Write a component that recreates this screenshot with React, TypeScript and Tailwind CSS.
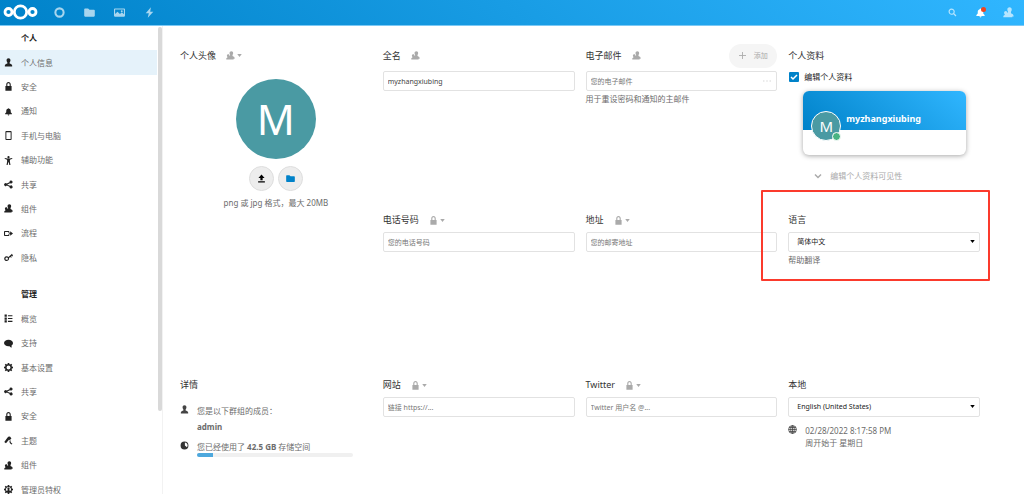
import React from "react";

type IconProps = { className?: string };

function Glyph({ className = "size-[9px]", children }: IconProps & { children: React.ReactNode }) {
  return (
    <svg viewBox="0 0 16 16" className={`shrink-0 ${className}`} fill="currentColor" aria-hidden="true">
      {children}
    </svg>
  );
}

const shapes = {
  user: <path d="M8 .5C5.900.5 4.500 2 4.500 4.200c0 1.600.7 2.900 1.500 3.600v2C4.300 10.700 1.500 11 1.500 13.500V15h13v-1.500c0-2.500-2.800-2.800-4.500-3.700v-2c.8-.7 1.500-2 1.500-3.600C11.500 2 10.100.5 8 .5z" />,
  lock: <path fillRule="evenodd" d="M8 0C5.600 0 4 1.900 4 4.300V7H2.500v8.500h11V7H12V4.300C12 1.900 10.400 0 8 0zm0 2c1.300 0 2 1 2 2.300V7H6V4.300C6 3 6.700 2 8 2z" />,
  bell: <path d="M8 2C7.300 2 6.800 2.500 6.800 3.200 4.900 3.700 4 5.200 4 7v2.500L2 11.500V13h12v-1.500l-2-2V7c0-1.800-.9-3.300-2.800-3.800C9.200 2.500 8.700 2 8 2zM6.500 13.500c0 1 .7 1.700 1.500 1.700s1.500-.7 1.500-1.700z" />,
  phone: <path fillRule="evenodd" d="M4 0C3.100 0 2.500.6 2.500 1.500v13c0 .9.600 1.500 1.500 1.500h8c.9 0 1.500-.6 1.500-1.500v-13C13.500.6 12.900 0 12 0zm.2 2h7.600v12H4.200z" />,
  access: <path d="M8 0a2 2 0 1 1 0 4 2 2 0 0 1 0-4zM1.500 3.500 6 4.600h4l4.500-1.100.4 1.600L10.500 6.500V10l1 6h-2L8.400 11h-.8L6.500 16h-2l1-6V6.500L1.100 5.100z" />,
  share: <path d="M12.500 1a2.700 2.700 0 0 0-2.700 3L5 6.300a2.700 2.700 0 1 0 0 3.600l4.800 2.300a2.700 2.700 0 1 0 1-2L6.100 8.300v-.4L10.800 5.700A2.700 2.700 0 1 0 12.500 1z" />,
  contacts: <path d="M9.500.5C7.500.5 6.300 1.900 6.300 3.800c0 1.300.4 2.300 1 3v1C6.900 8 6.500 8.200 6.100 8.500 6.200 6.700 5.400 5.700 4 5.700S1.600 6.800 1.600 8.200c0 1 .4 1.800.9 2.300v1C1.500 12 .5 12.300.5 13.700V15h13v-1.300H15.500C15.500 10.500 13.500 10 11.600 9V6.800c.7-.7 1.100-1.700 1.100-3C12.700 1.900 11.500.5 9.500.5z" />,
  flow: <path fillRule="evenodd" d="M1.800 3.500C.8 3.500 0 4.300 0 5.300v5.400c0 1 .8 1.800 1.800 1.800h6c1 0 1.700-.8 1.700-1.800V5.300c0-1-.7-1.800-1.700-1.800zm.1 1.700h5.800v5.600H1.900zM11 4l5 4-5 4V9.200H7.500V6.800H11z" />,
  key: <path fillRule="evenodd" d="M14.200 1.300 8 7.200A4.300 4.300 0 1 0 9 10c0-.3 0-.6-.1-.9l2.200-2.100 1.500 1.500 1.300-1.300-1.500-1.500.9-.9 1.300 1.300L16 4.700zM4.800 7.800a2.200 2.200 0 1 1 0 4.400 2.200 2.200 0 0 1 0-4.400z" />,
  list: <path d="M1 1h4v4H1zm6 1h8v2H7zM1 6h4v4H1zm6 1h8v2H7zM1 11h4v4H1zm6 1h8v2H7z" />,
  comment: <path d="M8 1.500c-4.400 0-8 2.400-8 5.700s3.600 5.700 8 5.700c.7 0 1.300-.1 1.900-.2.900 1.200 2.300 2.300 4.100 2.600-.5-1-.7-2.500-.6-3.700C15 10.600 16 9 16 7.200c0-3.300-3.600-5.700-8-5.700z" />,
  gear: <path fillRule="evenodd" d="M6.700 0h2.600l.4 2.100 1.300.6L12.800 1.500l1.800 1.800-1.200 1.800.5 1.200 2.100.4v2.600l-2.100.4-.5 1.300 1.200 1.800-1.800 1.800-1.800-1.200-1.300.5L9.300 16H6.700l-.4-2.100-1.300-.5-1.800 1.200-1.800-1.800L2.600 11l-.5-1.300L0 9.300V6.700l2.100-.4.500-1.300-1.200-1.700 1.800-1.800L5 2.700l1.300-.6zM8 4.500a3.500 3.500 0 1 0 0 7 3.500 3.500 0 0 0 0-7z" />,
  brush: <path d="M9.500 1C8 1 7 1.800 6 3L.5 10.500 3.500 13l5.300-6.200 1.700.4 2.700-2.700L11 1.200zM9.800 8.500l1.600-1.500c-.2 3 .8 5 3.600 6.600L13.500 15C10.500 13.500 9.500 11.500 9.800 8.500z" />,
  badge: <path fillRule="evenodd" d="M6.700 0h2.600l.4 2.100 1.300.6 1.800-1.200 1.800 1.800-1.200 1.800.5 1.200 2.100.4v2.600l-2.100.4-.5 1.300 1.200 1.800-1.800 1.800-1.800-1.200-1.300.5L9.300 16H6.700l-.4-2.100-1.300-.5-1.800 1.200-1.800-1.800L2.600 11l-.5-1.300L0 9.300V6.700l2.100-.4.500-1.300-1.200-1.700 1.800-1.800L5 2.700l1.300-.6zM8 3.500a4.500 4.500 0 0 0-3.600 7.200L6.800 9.300V8.500C6.300 8 6 7.300 6 6.500 6 5.300 6.800 4.500 8 4.500s2 .8 2 2c0 .8-.3 1.500-.8 2v.8l2.400 1.400A4.500 4.500 0 0 0 8 3.500z" />,
  folder: <path d="M1.500 2C.7 2 .3 2.500.3 3.200v9.600c0 .7.500 1.200 1.200 1.200h13c.7 0 1.200-.5 1.200-1.200V5.200c0-.7-.5-1.200-1.200-1.200H8L6 2z" />,
  image: <path fillRule="evenodd" d="M1.200 2C.5 2 0 2.500 0 3.200v9.600c0 .7.5 1.200 1.200 1.200h13.600c.7 0 1.200-.5 1.200-1.200V3.200c0-.7-.5-1.200-1.200-1.200zm.4 1.600h12.800v7.100l-3-3.200-2.700 2.700L5 7l-3.400 3.200zm9.700 1a1.400 1.400 0 1 0 0 2.800 1.400 1.400 0 0 0 0-2.800z" />,
  bolt: <path d="M10 .5 2.500 9H7l-1.500 6.500L13.500 7H9z" />,
  ring: <circle cx="8" cy="8" r="6" fill="none" stroke="currentColor" strokeWidth="3" />,
  search: <path fillRule="evenodd" d="M6.500 1a5.500 5.500 0 1 0 3 10.100l3.900 3.900 1.600-1.600-3.900-3.900A5.500 5.500 0 0 0 6.500 1zm0 2a3.500 3.500 0 1 1 0 7 3.500 3.500 0 0 1 0-7z" />,
  upload: <path d="M8 1 2.500 7H6v4h4V7h3.500zM2 13h12v2H2z" />,
  quota: <path fillRule="evenodd" d="M8 1a7 7 0 1 0 0 14A7 7 0 0 0 8 1zm.7 1.700a5.300 5.300 0 0 1 3.700 8.500L8.700 8z" />,
  globe: (
    <g fill="none" stroke="currentColor" strokeWidth="1.400">
      <circle cx="8" cy="8" r="7" />
      <ellipse cx="8" cy="8" rx="3.300" ry="7" />
      <path d="M8 1v14M1 8h14M2 4.500h12M2 11.500h12" />
    </g>
  ),
};

type ShapeName = keyof typeof shapes;

function Icon({ name, className }: IconProps & { name: ShapeName }) {
  return <Glyph className={className}>{shapes[name]}</Glyph>;
}

function Caret({ className = "" }: IconProps) {
  return (
    <svg viewBox="0 0 6 4" className={`h-[3px] w-[5px] shrink-0 ${className}`} fill="currentColor" aria-hidden="true">
      <path d="M0 0h6L3 4z" />
    </svg>
  );
}

type NavItem = { label: string; icon: ShapeName; active?: boolean };

const personal: NavItem[] = [
  { label: "个人信息", icon: "user", active: true },
  { label: "安全", icon: "lock" },
  { label: "通知", icon: "bell" },
  { label: "手机与电脑", icon: "phone" },
  { label: "辅助功能", icon: "access" },
  { label: "共享", icon: "share" },
  { label: "组件", icon: "contacts" },
  { label: "流程", icon: "flow" },
  { label: "隐私", icon: "key" },
];

const admin: NavItem[] = [
  { label: "概览", icon: "list" },
  { label: "支持", icon: "comment" },
  { label: "基本设置", icon: "gear" },
  { label: "共享", icon: "share" },
  { label: "安全", icon: "lock" },
  { label: "主题", icon: "brush" },
  { label: "组件", icon: "contacts" },
  { label: "管理员特权", icon: "badge" },
];

function NavGroup({ title, items, className }: { title: string; items: NavItem[]; className: string }) {
  return (
    <ul className={`grid auto-rows-fr ${className}`}>
      <li className="flex items-center pl-[21px] font-bold text-[#222]">{title}</li>
      {items.map((item) => (
        <li key={item.label} className="flex">
          <a
            href="#"
            aria-current={item.active ? "page" : undefined}
            className={`flex flex-1 items-center gap-2 pl-1 ${item.active ? "bg-[#e5f2fa]" : ""}`}
          >
            <Icon name={item.icon} className="size-[9px] text-[#222]" />
            {item.label}
          </a>
        </li>
      ))}
    </ul>
  );
}

function Heading({
  title,
  htmlFor,
  scope,
  menu,
  tall,
  children,
}: {
  title: string;
  htmlFor?: string;
  scope?: ShapeName;
  menu?: boolean;
  tall?: boolean;
  children?: React.ReactNode;
}) {
  return (
    <div className={`mb-[2px] flex items-center ${tall ? "h-[27px]" : "h-5"}`}>
      <h3 className="text-[9px] text-[#333]">{htmlFor ? <label htmlFor={htmlFor}>{title}</label> : title}</h3>
      {scope && (
        <button type="button" aria-label={`${title}可见范围`} className="ml-[10px] flex items-center gap-[2px] text-[#aaa]">
          <Icon name={scope} className="size-[9px]" />
          {menu && <Caret />}
        </button>
      )}
      {children}
    </div>
  );
}

const inputClass =
  "block h-5 w-full min-w-0 rounded-[2px] border border-[#e2e2e2] bg-white px-1 text-[7px] text-[#444] outline-none placeholder:text-[#777] placeholder:opacity-100";

function SelectBox({ id, value }: { id: string; value: string }) {
  return (
    <div className="relative">
      <select
        id={id}
        className="block h-5 w-full appearance-none rounded-[2px] border border-[#e2e2e2] bg-white pr-4 pl-2 text-[7px] text-[#222] outline-none"
      >
        <option>{value}</option>
      </select>
      <Caret className="pointer-events-none absolute top-2 right-[5px] text-black" />
    </div>
  );
}

function Header() {
  const apps: { label: string; icon: ShapeName }[] = [
    { label: "仪表盘", icon: "ring" },
    { label: "文件", icon: "folder" },
    { label: "照片", icon: "image" },
    { label: "动态", icon: "bolt" },
  ];
  return (
    <header className="flex h-[26px] shrink-0 items-center border-b border-[#7cc9f5] bg-[linear-gradient(40deg,#0082c9_0%,#30b6ff_100%)] px-[2px] pb-px text-white">
      <a href="#" aria-label="Nextcloud" className="mr-1">
        <svg viewBox="0 0 38 18" className="h-[18px] w-[38px]" fill="none" stroke="currentColor" strokeWidth="2.800" aria-hidden="true">
          <circle cx="6.500" cy="9" r="3.500" />
          <circle cx="18.500" cy="9" r="6.200" />
          <circle cx="30.500" cy="9" r="3.500" />
        </svg>
      </a>
      <nav className="flex flex-1">
        {apps.map((app) => (
          <a key={app.label} href="#" aria-label={app.label} className="flex w-[30px] justify-center text-white/65">
            <Icon name={app.icon} className="size-[11px]" />
          </a>
        ))}
      </nav>
      <button type="button" aria-label="搜索" className="flex w-7 justify-center text-white/65">
        <Icon name="search" className="size-[9px]" />
      </button>
      <button type="button" aria-label="通知" className="relative flex w-7 justify-center">
        <Icon name="bell" className="size-[11px]" />
        <span className="absolute top-0 right-[8px] size-[5px] rounded-full bg-[#f0441e]" />
      </button>
      <button type="button" aria-label="联系人" className="flex w-7 justify-center text-white/65">
        <Icon name="contacts" className="size-[11px]" />
      </button>
    </header>
  );
}

export default function App() {
  return (
    <div className="flex h-screen flex-col overflow-hidden bg-white font-['Noto_Sans','Noto_Sans_CJK_SC',sans-serif] text-[8px] leading-3 text-[#6c6c6c]">
      <Header />
      <div className="flex min-h-0 flex-1">
        <aside className="flex w-[163px] shrink-0 gap-px overflow-hidden border-r border-[#f2f2f2]">
          <nav className="flex-1">
            <NavGroup title="个人" items={personal} className="min-h-[244px]" />
            <NavGroup title="管理" items={admin} className="mt-3 min-h-[220px]" />
          </nav>
          <div className="mt-px h-[384px] w-1 rounded-full bg-[#d9d9d9]" />
        </aside>

        <main className="grid flex-1 grid-cols-4 grid-rows-[minmax(168px,auto)_minmax(165px,auto)_auto] content-start gap-x-[11px] pt-4 pr-11 pl-[17px]">
          <section>
            <Heading title="个人头像" scope="contacts" menu tall />
            <div className="flex flex-col items-center pt-2">
              <div className="flex size-20 items-center justify-center rounded-full bg-[#4a9aa3] text-[42px] leading-none text-white">M</div>
              <div className="mt-[7px] flex gap-1">
                <button type="button" aria-label="上传" className="flex size-[25px] items-center justify-center rounded-full border border-[#dedede] bg-[#ededed] text-black">
                  <Icon name="upload" className="size-[9px]" />
                </button>
                <button type="button" aria-label="从文件选择" className="flex size-[25px] items-center justify-center rounded-full border border-[#dedede] bg-[#ededed] text-[#0082c9]">
                  <Icon name="folder" className="size-[9px]" />
                </button>
              </div>
              <p className="mt-[6px]">png 或 jpg 格式，最大 20MB</p>
            </div>
          </section>

          <section>
            <Heading title="全名" htmlFor="fullname" scope="contacts" tall />
            <input id="fullname" defaultValue="myzhangxiubing" className={inputClass} />
          </section>

          <section>
            <Heading title="电子邮件" htmlFor="email" scope="contacts" tall>
              <button type="button" className="ml-auto flex h-6 w-12 items-center justify-center gap-2 rounded-full bg-[#f5f5f5] text-[7px] text-[#aaa]">
                <svg viewBox="0 0 8 8" className="size-[7px]" stroke="currentColor" aria-hidden="true">
                  <path d="M4 0v8M0 4h8" />
                </svg>
                添加
              </button>
            </Heading>
            <div className="relative">
              <input id="email" type="email" placeholder="您的电子邮件" className={inputClass} />
              <button type="button" aria-label="更多" className="absolute top-1 right-[6px] text-[#ddd]">
                <svg viewBox="0 0 10 2" className="h-[12px] w-2" fill="currentColor" aria-hidden="true">
                  <circle cx="1" cy="1" r="1" />
                  <circle cx="5" cy="1" r="1" />
                  <circle cx="9" cy="1" r="1" />
                </svg>
              </button>
            </div>
            <p className="mt-[2px]">用于重设密码和通知的主邮件</p>
          </section>

          <section>
            <Heading title="个人资料" tall />
            <label className="flex items-center gap-[5px] pl-px text-[#222]">
              <span className="relative flex">
                <input type="checkbox" defaultChecked className="size-[10px] appearance-none rounded-[1px] bg-white checked:bg-[#0082c9]" />
                <svg viewBox="0 0 10 10" className="pointer-events-none absolute inset-0 size-[10px]" fill="none" stroke="white" strokeWidth="1.500" aria-hidden="true">
                  <path d="M2 5l2 2 4-4" />
                </svg>
              </span>
              编辑个人资料
            </label>
            <a href="#" className="mt-2 mr-[14px] ml-[15px] block rounded-md bg-white shadow-[0_1px_5px_rgba(0,0,0,0.35)]">
              <div className="flex h-[39px] items-end rounded-t-md bg-[linear-gradient(40deg,#0082c9_0%,#30b6ff_100%)] pb-[5px] pl-[43px] text-[9px] font-bold text-white">
                myzhangxiubing
              </div>
              <div className="relative h-[25px]">
                <div className="absolute bottom-[14px] left-2 flex size-[30px] items-center justify-center rounded-full border border-white bg-[#4a9aa3] text-[15px] text-white">
                  M
                  <span className="absolute -right-px -bottom-px size-[9px] rounded-full border border-white bg-[#49b382]" />
                </div>
              </div>
            </a>
            <button type="button" className="mt-[15px] ml-[26px] flex items-center gap-2 text-[#aaa]">
              <svg viewBox="0 0 8 8" className="size-2" fill="none" stroke="currentColor" strokeWidth="1.500" aria-hidden="true">
                <path d="M1 2.500l3 3 3-3" />
              </svg>
              编辑个人资料可见性
            </button>
          </section>

          <section className="col-start-2">
            <Heading title="电话号码" htmlFor="phone" scope="lock" menu />
            <input id="phone" type="tel" placeholder="您的电话号码" className={inputClass} />
          </section>

          <section>
            <Heading title="地址" htmlFor="address" scope="lock" menu />
            <input id="address" placeholder="您的邮寄地址" className={inputClass} />
          </section>

          <section className="relative">
            <Heading title="语言" htmlFor="language" />
            <SelectBox id="language" value="简体中文" />
            <a href="#" className="mt-[2px] block">帮助翻译</a>
            <div className="pointer-events-none absolute -top-5 -right-[10px] -left-[27px] h-[91px] rounded-[1px] border-2 border-[#fb3a2c]" />
          </section>

          <section>
            <Heading title="详情" />
            <div className="flex gap-2 pt-2">
              <Icon name="user" className="size-[9px] text-[#444]" />
              <div>
                <p>您是以下群组的成员：</p>
                <p className="mt-1 font-bold">admin</p>
              </div>
            </div>
            <div className="mt-2 flex gap-2">
              <Icon name="quota" className="size-[9px] text-[#333]" />
              <div className="w-[156px]">
                <label htmlFor="quota" className="block">
                  您已经使用了 <strong>42.5 GB</strong> 存储空间
                </label>
                <progress
                  id="quota"
                  value={10}
                  max={100}
                  className="block h-[4px] w-full appearance-none overflow-hidden rounded-full bg-[#f0f0f0] [&::-webkit-progress-bar]:bg-[#f0f0f0] [&::-webkit-progress-value]:bg-[#4da8dd]"
                />
              </div>
            </div>
          </section>

          <section>
            <Heading title="网站" htmlFor="website" scope="lock" menu />
            <input id="website" type="url" placeholder="链接 https://..." className={inputClass} />
          </section>

          <section>
            <Heading title="Twitter" htmlFor="twitter" scope="lock" menu />
            <input id="twitter" placeholder="Twitter 用户名 @..." className={inputClass} />
          </section>

          <section>
            <Heading title="本地" htmlFor="locale" />
            <SelectBox id="locale" value="English (United States)" />
            <div className="mt-2 flex gap-2">
              <Icon name="globe" className="size-[9px] text-[#444]" />
              <div>
                <p>02/28/2022 8:17:58 PM</p>
                <p>周开始于 星期日</p>
              </div>
            </div>
          </section>
        </main>
      </div>
    </div>
  );
}
